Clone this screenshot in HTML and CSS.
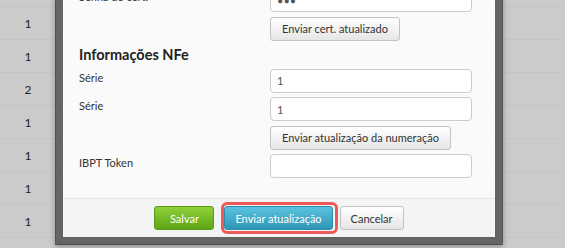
FILE: index.html
```html
<!DOCTYPE html>
<html lang="pt-BR">
<head>
    <meta charset="UTF-8">
    <title>Configuração da empresa</title>
    <link rel="stylesheet" href="styles.css">
</head>
<body>
    <div class="grid-bg">
        <div class="grid-row first"><span></span></div>
        <div class="grid-row"><span>1</span></div>
        <div class="grid-row"><span>1</span></div>
        <div class="grid-row"><span>2</span></div>
        <div class="grid-row"><span>1</span></div>
        <div class="grid-row"><span>1</span></div>
        <div class="grid-row"><span>1</span></div>
        <div class="grid-row"><span>1</span></div>
    </div>

    <div class="modal">
        <div class="modal-body">
            <label class="field-label" for="senhaCert">Senha do cert.</label>
            <input type="password" id="senhaCert" class="field-input" value="123">

            <span></span>
            <div><button type="button" class="btn">Enviar cert. atualizado</button></div>

            <h3 class="section-title">Informações NFe</h3>

            <label class="field-label" for="serie1">Série</label>
            <input type="text" id="serie1" class="field-input" value="1">

            <label class="field-label" for="serie2">Série</label>
            <input type="text" id="serie2" class="field-input" value="1">

            <span></span>
            <div><button type="button" class="btn">Enviar atualização da numeração</button></div>

            <label class="field-label" for="ibpt">IBPT Token</label>
            <input type="text" id="ibpt" class="field-input" value="">
        </div>
        <div class="modal-footer">
            <button type="button" class="btn btn-success">Salvar</button>
            <button type="button" class="btn btn-info highlighted">Enviar atualização</button>
            <button type="button" class="btn">Cancelar</button>
        </div>
    </div>
</body>
</html>
```

FILE: styles.css
```css
:root {
    --text-color: #333333;
    --line-color: #c4c8bb;
    --table-bg: #cbcbcb;
}

body {
    margin: 0;
    height: 248px;
    overflow: hidden;
    background-color: var(--table-bg);
    font-family: 'Lato', 'Open Sans', sans-serif;
    font-size: 11px;
    color: var(--text-color);
}

/* table behind the dialog */
.grid-bg {
    display: flex;
    flex-direction: column;
}

.grid-row {
    height: 32px;
    border-bottom: 1px solid var(--line-color);
    display: flex;
    align-items: center;
}

.grid-row.first {
    margin-top: -26px;
}

.grid-row span {
    width: 56px;
    text-align: center;
    font-size: 12px;
    color: #222;
}

/* dialog */
.modal {
    position: absolute;
    left: 55px;
    bottom: 3px;
    width: 432px;
    border: 8px solid rgba(0, 0, 0, 0.5);
    background-color: #fafafa;
    background-clip: padding-box;
    box-shadow: 0 2px 6px rgba(0, 0, 0, 0.3);
}

.modal-body {
    display: grid;
    grid-template-columns: 191px 202px;
    row-gap: 4.5px;
    padding: 10px 23px 20px 16px;
}

.field-label {
    line-height: 18px;
    font-size: 11px;
}

.field-input {
    height: 24px;
    box-sizing: border-box;
    padding: 0 6px;
    border: 1px solid #cccccc;
    border-radius: 4px;
    background: #ffffff;
    font-family: inherit;
    font-size: 11px;
    color: #555;
}

.section-title {
    grid-column: 1 / 3;
    margin: 0;
    line-height: 19px;
    font-size: 14.5px;
    font-weight: bold;
    color: #222;
}

.btn {
    height: 24px;
    padding: 0 11px;
    border: 1px solid #c2c2c2;
    border-radius: 3px;
    background: linear-gradient(#ffffff, #e6e6e6);
    font-family: inherit;
    font-size: 11px;
    color: #333;
    cursor: pointer;
}

.modal-footer {
    display: flex;
    justify-content: center;
    gap: 7px;
    padding: 7px 0;
    border-top: 1px solid #e5e5e5;
    background-color: #f4f4f4;
}

.modal-footer .btn {
    padding: 0 10px;
}

.btn-success {
    min-width: 60px;
    border-color: #5a9a17;
    background: linear-gradient(#8fd03a, #5ea515);
    color: #ffffff;
}

.btn-info {
    margin-left: 3px;
    border-color: #2a8bab;
    background: linear-gradient(#5bc3e0, #2f95b5);
    color: #ffffff;
}

/* red annotation box around the highlighted action */
.highlighted {
    position: relative;
}

.highlighted::after {
    content: "";
    position: absolute;
    left: -4px;
    right: -6px;
    top: -5px;
    bottom: -5px;
    border: 3px solid #ec5a5a;
    border-radius: 6px;
}
```
